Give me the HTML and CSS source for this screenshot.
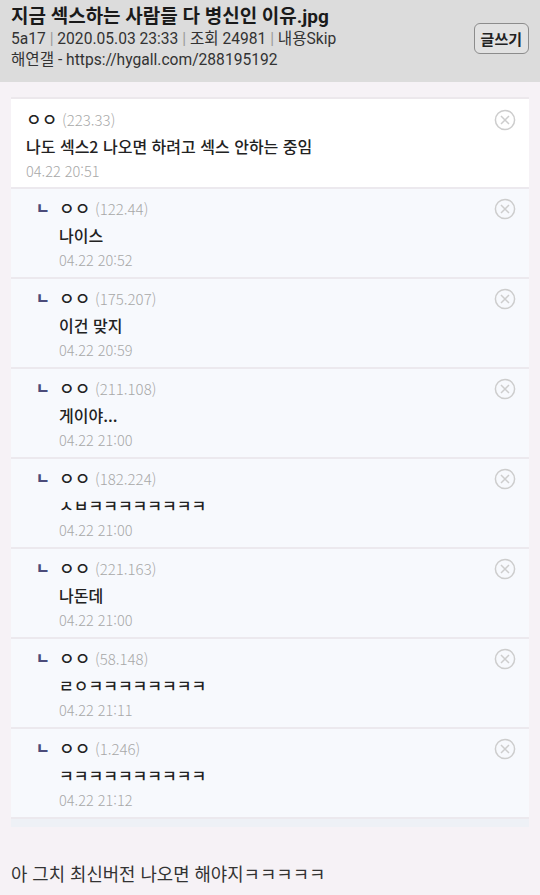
FILE: index.html
```html
<!DOCTYPE html>
<html lang="ko">
<head>
    <meta charset="UTF-8">
    <meta name="viewport" content="width=device-width, initial-scale=1.0">
    <title>지금 섹스하는 사람들 다 병신인 이유.jpg</title>
    <link rel="stylesheet" href="styles.css">
</head>
<body>
    <div class="header">
        <div class="header-info">
            <h1>지금 섹스하는 사람들 다 병신인 이유.jpg</h1>
            <div class="meta">5a17 <span class="sep">|</span> 2020.05.03 23:33 <span class="sep">|</span> 조회 24981 <span class="sep">|</span> 내용Skip</div>
            <div class="meta">해연갤 - https://hygall.com/288195192</div>
        </div>
        <button class="write-button">글쓰기</button>
    </div>

    <div class="comments">
        <div class="comment">
            <div class="comment-body">
                <div class="name">ㅇㅇ <span class="ip">(223.33)</span></div>
                <div class="text">나도 섹스2 나오면 하려고 섹스 안하는 중임</div>
                <div class="date">04.22 20:51</div>
            </div>
            <svg class="close" width="22" height="22" viewBox="0 0 22 22"><circle cx="11" cy="11" r="9.6" fill="none" stroke="#cdcdcd" stroke-width="1.5"/><path d="M7 7L15 15M15 7L7 15" stroke="#cdcdcd" stroke-width="1.5"/></svg>
        </div>
        <div class="comment reply">
            <span class="arrow">ㄴ</span>
            <div class="comment-body">
                <div class="name">ㅇㅇ <span class="ip">(122.44)</span></div>
                <div class="text">나이스</div>
                <div class="date">04.22 20:52</div>
            </div>
            <svg class="close" width="22" height="22" viewBox="0 0 22 22"><circle cx="11" cy="11" r="9.6" fill="none" stroke="#cdcdcd" stroke-width="1.5"/><path d="M7 7L15 15M15 7L7 15" stroke="#cdcdcd" stroke-width="1.5"/></svg>
        </div>
        <div class="comment reply">
            <span class="arrow">ㄴ</span>
            <div class="comment-body">
                <div class="name">ㅇㅇ <span class="ip">(175.207)</span></div>
                <div class="text">이건 맞지</div>
                <div class="date">04.22 20:59</div>
            </div>
            <svg class="close" width="22" height="22" viewBox="0 0 22 22"><circle cx="11" cy="11" r="9.6" fill="none" stroke="#cdcdcd" stroke-width="1.5"/><path d="M7 7L15 15M15 7L7 15" stroke="#cdcdcd" stroke-width="1.5"/></svg>
        </div>
        <div class="comment reply">
            <span class="arrow">ㄴ</span>
            <div class="comment-body">
                <div class="name">ㅇㅇ <span class="ip">(211.108)</span></div>
                <div class="text">게이야...</div>
                <div class="date">04.22 21:00</div>
            </div>
            <svg class="close" width="22" height="22" viewBox="0 0 22 22"><circle cx="11" cy="11" r="9.6" fill="none" stroke="#cdcdcd" stroke-width="1.5"/><path d="M7 7L15 15M15 7L7 15" stroke="#cdcdcd" stroke-width="1.5"/></svg>
        </div>
        <div class="comment reply">
            <span class="arrow">ㄴ</span>
            <div class="comment-body">
                <div class="name">ㅇㅇ <span class="ip">(182.224)</span></div>
                <div class="text">ㅅㅂㅋㅋㅋㅋㅋㅋㅋㅋ</div>
                <div class="date">04.22 21:00</div>
            </div>
            <svg class="close" width="22" height="22" viewBox="0 0 22 22"><circle cx="11" cy="11" r="9.6" fill="none" stroke="#cdcdcd" stroke-width="1.5"/><path d="M7 7L15 15M15 7L7 15" stroke="#cdcdcd" stroke-width="1.5"/></svg>
        </div>
        <div class="comment reply">
            <span class="arrow">ㄴ</span>
            <div class="comment-body">
                <div class="name">ㅇㅇ <span class="ip">(221.163)</span></div>
                <div class="text">나돈데</div>
                <div class="date">04.22 21:00</div>
            </div>
            <svg class="close" width="22" height="22" viewBox="0 0 22 22"><circle cx="11" cy="11" r="9.6" fill="none" stroke="#cdcdcd" stroke-width="1.5"/><path d="M7 7L15 15M15 7L7 15" stroke="#cdcdcd" stroke-width="1.5"/></svg>
        </div>
        <div class="comment reply">
            <span class="arrow">ㄴ</span>
            <div class="comment-body">
                <div class="name">ㅇㅇ <span class="ip">(58.148)</span></div>
                <div class="text">ㄹㅇㅋㅋㅋㅋㅋㅋㅋㅋ</div>
                <div class="date">04.22 21:11</div>
            </div>
            <svg class="close" width="22" height="22" viewBox="0 0 22 22"><circle cx="11" cy="11" r="9.6" fill="none" stroke="#cdcdcd" stroke-width="1.5"/><path d="M7 7L15 15M15 7L7 15" stroke="#cdcdcd" stroke-width="1.5"/></svg>
        </div>
        <div class="comment reply">
            <span class="arrow">ㄴ</span>
            <div class="comment-body">
                <div class="name">ㅇㅇ <span class="ip">(1.246)</span></div>
                <div class="text">ㅋㅋㅋㅋㅋㅋㅋㅋㅋㅋ</div>
                <div class="date">04.22 21:12</div>
            </div>
            <svg class="close" width="22" height="22" viewBox="0 0 22 22"><circle cx="11" cy="11" r="9.6" fill="none" stroke="#cdcdcd" stroke-width="1.5"/><path d="M7 7L15 15M15 7L7 15" stroke="#cdcdcd" stroke-width="1.5"/></svg>
        </div>
    </div>

    <p class="post-text">아 그치 최신버전 나오면 해야지ㅋㅋㅋㅋㅋ</p>
</body>
</html>
```

FILE: styles.css
```css
body {
    margin: 0;
    background-color: #f6f2f6;
    font-family: Roboto, "Noto Sans CJK KR", sans-serif;
    color: #222;
}
.header {
    background-color: #dcdcdc;
    height: 82px;
    box-sizing: border-box;
    padding: 4px 11px 0 11px;
    display: flex;
    justify-content: space-between;
    align-items: flex-start;
}
h1 {
    margin: 0;
    font-size: 19px;
    font-weight: bold;
    line-height: 25px;
    color: #1a1a1a;
}
.meta {
    font-size: 15.6px;
    line-height: 21px;
    color: #333;
}
.sep {
    color: #9a9a9a;
}
.write-button {
    margin-top: 19px;
    padding: 0 6px;
    height: 31px;
    background: #e2e2e2;
    border: 1px solid #8c8c8c;
    border-radius: 6px;
    font-family: "Noto Sans CJK KR", sans-serif;
    font-size: 15px;
    font-weight: bold;
    color: #222;
}
.comments {
    margin: 15px 11px 0 11px;
    border-top: 2px solid #ece8ec;
    background-color: #eef1f6;
    padding-bottom: 8px;
}
.comment {
    display: flex;
    align-items: flex-start;
    background-color: #ffffff;
    border-bottom: 2px solid #ece9ee;
    height: 90px;
    box-sizing: border-box;
    padding: 8px 13px 0 15px;
    font-family: "Noto Sans CJK KR", sans-serif;
}
.reply {
    background-color: #f7f9fd;
    padding-top: 7px;
    padding-left: 25px;
}
.arrow {
    width: 23px;
    font-size: 15px;
    font-weight: 900;
    line-height: 24px;
    color: #4c4c7a;
}
.comment-body {
    flex: 1;
}
.name {
    font-size: 17px;
    font-weight: 500;
    line-height: 24px;
    color: #222;
}
.ip {
    font-weight: 300;
    font-size: 15px;
    color: #a8a8a8;
}
.text {
    font-size: 16px;
    font-weight: 500;
    line-height: 28px;
    color: #222;
}
.date {
    font-size: 14.5px;
    font-weight: 300;
    line-height: 22px;
    color: #a8a8a8;
}
.close {
    margin-top: 2px;
}
.post-text {
    margin: 33px 11px 0 11px;
    font-family: "Noto Sans CJK KR", sans-serif;
    font-size: 17.8px;
    color: #333;
}
```
